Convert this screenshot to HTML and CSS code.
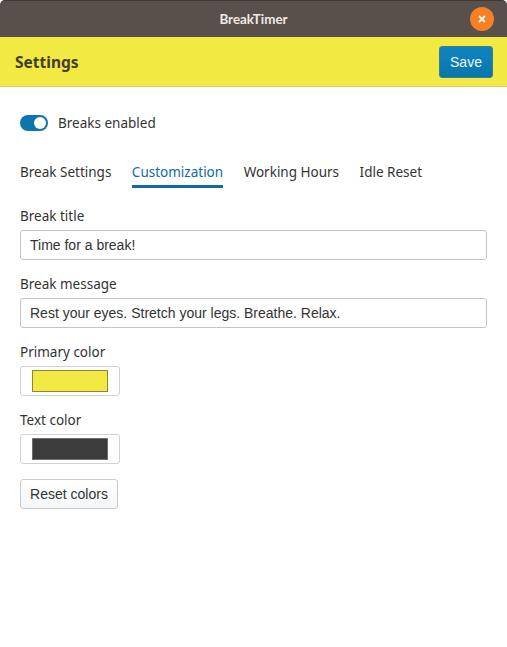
FILE: index.html
```html
<!DOCTYPE html>
<html>
<head>
	<meta charset="utf-8">
	<title>BreakTimer</title>
	<link rel="stylesheet" href="styles.css">
</head>
<body>
	<div class="titlebar">
		<span class="window-title">BreakTimer</span>
		<div class="close-btn">
			<svg width="8" height="8" viewBox="0 0 8 8"><path d="M1 1 L7 7 M7 1 L1 7" stroke="#fdf3e8" stroke-width="1.8" fill="none"/></svg>
		</div>
	</div>
	<div class="navbar">
		<span class="heading">Settings</span>
		<button class="save-btn">Save</button>
	</div>
	<div class="content">
		<div class="switch-row">
			<div class="switch"><div class="knob"></div></div>
			<span class="switch-label">Breaks enabled</span>
		</div>
		<div class="tabs">
			<div class="tab">Break Settings</div>
			<div class="tab active">Customization</div>
			<div class="tab">Working Hours</div>
			<div class="tab">Idle Reset</div>
		</div>
		<div class="field">
			<label>Break title</label>
			<input class="text-input" type="text" value="Time for a break!">
		</div>
		<div class="field">
			<label>Break message</label>
			<input class="text-input" type="text" value="Rest your eyes. Stretch your legs. Breathe. Relax.">
		</div>
		<div class="field">
			<label>Primary color</label>
			<div class="color-input"><div class="swatch yellow"></div></div>
		</div>
		<div class="field">
			<label>Text color</label>
			<div class="color-input"><div class="swatch dark"></div></div>
		</div>
		<button class="reset-btn">Reset colors</button>
	</div>
</body>
</html>
```

FILE: styles.css
```css
html, body {
	margin: 0;
	padding: 0;
	height: 100%;
	overflow: hidden;
	background-color: #fff;
	font-family: "Noto Sans", sans-serif;
	font-size: 13.5px;
	color: #333;
}
.titlebar {
	height: 37px;
	box-sizing: border-box;
	display: flex;
	align-items: center;
	justify-content: center;
	position: relative;
	background-color: #59504c;
	border-top: 1px solid #3f3935;
	border-radius: 5px 5px 0 0;
}
.window-title {
	font-family: "Lato", sans-serif;
	font-size: 13.4px;
	font-weight: 700;
	color: #eeeae6;
}
.close-btn {
	position: absolute;
	right: 13px;
	top: 6px;
	width: 24px;
	height: 24px;
	border-radius: 50%;
	background-color: #f58025;
	display: flex;
	align-items: center;
	justify-content: center;
}
.navbar {
	height: 50px;
	box-sizing: border-box;
	padding: 0 14px 0 15px;
	display: flex;
	align-items: center;
	justify-content: space-between;
	background-color: #f2e942;
	border-bottom: 1px solid #d8d16a;
}
.heading {
	font-size: 15.5px;
	font-weight: 700;
	color: #3f3f33;
}
.save-btn {
	width: 54px;
	height: 32px;
	padding: 0;
	border: 1px solid #3a7f8c;
	border-radius: 3px;
	background: linear-gradient(#0f84c0, #0a75ad);
	color: #f2f8fb;
	font-family: "Liberation Sans", sans-serif;
	font-size: 14px;
}
.content {
	padding: 28px 20px 0;
	display: flex;
	flex-direction: column;
	align-items: flex-start;
}
.switch-row {
	display: flex;
	align-items: center;
	gap: 10px;
	height: 16px;
}
.switch-label {
	line-height: 16px;
}
.switch {
	width: 28px;
	height: 16px;
	border-radius: 8px;
	background-color: #0f75ad;
	display: flex;
	align-items: center;
	justify-content: flex-end;
	padding-right: 2px;
	box-sizing: border-box;
}
.knob {
	width: 12px;
	height: 12px;
	border-radius: 50%;
	background-color: #fff;
}
.tabs {
	display: flex;
	gap: 20.5px;
	margin-top: 30px;
	margin-bottom: 18px;
}
.tab {
	height: 27px;
	box-sizing: border-box;
	line-height: 20px;
	padding-top: 1px;
}
.tab.active {
	color: #106ba3;
	border-bottom: 3px solid #106ba3;
}
.field {
	width: 100%;
	margin-bottom: 14px;
}
.field label {
	display: block;
	line-height: 20px;
	margin-bottom: 4px;
}
.text-input {
	display: block;
	width: 100%;
	height: 30px;
	box-sizing: border-box;
	padding: 0 9px;
	border: 1px solid #c4c4c4;
	border-radius: 3px;
	outline: none;
	font-family: "Liberation Sans", sans-serif;
	font-size: 14px;
	color: #333;
}
.color-input {
	width: 100px;
	height: 30px;
	box-sizing: border-box;
	border: 1px solid #d2d2d2;
	border-radius: 3px;
	display: flex;
	align-items: center;
	justify-content: center;
}
.swatch {
	width: 76px;
	height: 22px;
	box-sizing: border-box;
	border: 1px solid #6e6e6e;
}
.swatch.yellow {
	background-color: #f2e942;
	border-color: #8a8440;
}
.swatch.dark {
	background-color: #3c3c3c;
}
.reset-btn {
	width: 98px;
	height: 30px;
	padding: 0;
	margin-top: 1px;
	border: 1px solid #c8ccd0;
	border-radius: 3px;
	background: linear-gradient(#fff, #f4f6f8);
	font-family: "Liberation Sans", sans-serif;
	font-size: 14px;
	color: #333;
}
```
